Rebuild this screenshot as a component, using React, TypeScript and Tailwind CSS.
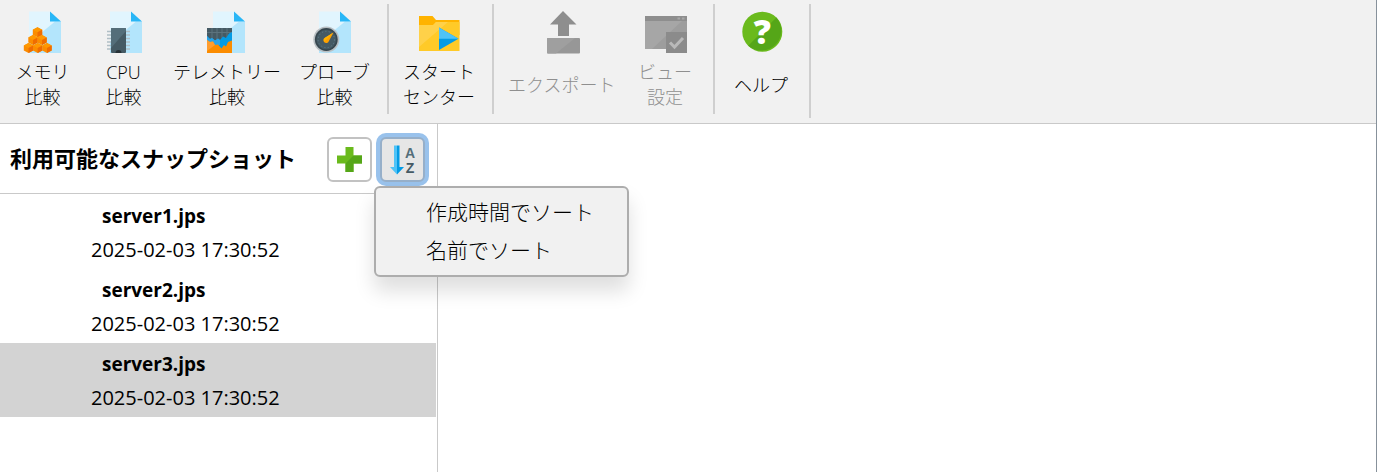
import { useState } from "react";
import type { ReactNode } from "react";

interface Snapshot {
  id: number;
  name: string;
  created: string;
}

interface ToolItem {
  key: string;
  lines: string[];
  icon: ReactNode;
  disabled?: boolean;
}

const snapshots: Snapshot[] = [
  { id: 1, name: "server1.jps", created: "2025-02-03 17:30:52" },
  { id: 2, name: "server2.jps", created: "2025-02-03 17:30:52" },
  { id: 3, name: "server3.jps", created: "2025-02-03 17:30:52" },
];

function IconBox({ children }: { children: ReactNode }) {
  return (
    <svg viewBox="0 0 42 42" className="h-[42px] w-[42px] shrink-0 overflow-visible" aria-hidden="true">
      {children}
    </svg>
  );
}

function Sheet() {
  return (
    <>
      <path d="M7 .5H28L39 10.5V42H7Z" fill="#e1f5fe" />
      <path d="M33 10.5H39V42H7V32Z" fill="#b3e5fc" />
      <path d="M28 .5L39 10.5H28Z" fill="#29b6f6" />
    </>
  );
}

function Cube({ x, y }: { x: number; y: number }) {
  return (
    <g transform={`translate(${x} ${y})`}>
      <path d="M0 -5L4.7 -2.6V2.6L0 5L-4.7 2.6V-2.6Z" fill="#fb8c00" />
      <path d="M0 -5L4.7 -2.6L0 0L-4.7 -2.6Z" fill="#ff9800" />
      <path d="M0 0L4.7 -2.6V2.6L0 5Z" fill="#ef6c00" />
    </g>
  );
}

function MemoryIcon() {
  return (
    <IconBox>
      <Sheet />
      <Cube x={15.5} y={21.3} />
      <Cube x={11} y={29} />
      <Cube x={20} y={29} />
      <Cube x={6.5} y={37} />
      <Cube x={15.7} y={37} />
      <Cube x={25} y={37} />
    </IconBox>
  );
}

function CpuIcon() {
  return (
    <IconBox>
      <Sheet />
      <path d="M4 20.5H27M4 24H27M4 27.5H27M4 31H27M4 34.5H27M4 38H27" stroke="#b0bec5" strokeWidth="1.6" />
      <rect x="8" y="17" width="15" height="25" rx="1" fill="#455a64" />
      <path d="M8 18Q8 17 9 17H22Q23 17 23 18V20L8 37Z" fill="#546e7a" />
      <path d="M12.5 42A3 3 0 0 1 18.5 42Z" fill="#263238" />
    </IconBox>
  );
}

function TelemetryIcon() {
  return (
    <IconBox>
      <Sheet />
      <rect x="1" y="17" width="25" height="25" fill="#455a64" />
      <path d="M6 17V28M11 17V28M16 17V28M21 17V28M1 21.5H26" stroke="#5c737e" strokeWidth="1" />
      <path d="M1 25L4 28L6 27L9 29.5L12 27.5L14 29L17 25.5L20 27L23 22.5L26 21V36L16 39L1 34Z" fill="#039be5" />
      <path d="M1 25L4 28L6 27L9 29.5L12 27.5L14 29V34H1Z" fill="#29a3e8" />
      <path d="M1 29L4 31L7 30.5L9 34L12 33.5L15.5 37.5L18 34L20 35.5L22 31L26 29.5V42H1Z" fill="#fb8c00" />
      <path d="M1 29L4 31L7 30.5L9 34L1 40Z" fill="#ff9d2e" />
    </IconBox>
  );
}

function ProbeIcon() {
  return (
    <IconBox>
      <g transform="translate(-1 0)">
        <Sheet />
      </g>
      <circle cx="13.3" cy="28.5" r="13" fill="#b8bfc3" />
      <circle cx="13.3" cy="28.5" r="11.4" fill="#37474f" />
      <circle cx="13.3" cy="28.5" r="9.8" fill="#455a64" />
      <circle cx="13.3" cy="28.5" r="8.2" fill="none" stroke="#607d8b" strokeWidth="1" strokeDasharray="1.2 2.2" />
      <path d="M20.5 21.5L15.8 30.2A2.8 2.8 0 1 1 12 26.7Z" fill="#ffa000" />
      <path d="M20.5 21.5L12 26.7A2.8 2.8 0 0 0 11.6 30.6Z" fill="#ffb300" />
    </IconBox>
  );
}

function StartIcon() {
  return (
    <IconBox>
      <path d="M1 5H14.5L18 9H41.5V24H1Z" fill="#ffb300" />
      <path d="M1 14H15L18 11H41.5V40H1Z" fill="#ffca28" />
      <path d="M1 14H15L18 11H30L1 36Z" fill="#ffd149" />
      <path d="M21 16.5L40.5 27.8L21 39Z" fill="#039be5" />
      <path d="M21 16.5L40.5 27.8H21Z" fill="#4fc3f7" />
    </IconBox>
  );
}

function ExportIcon() {
  return (
    <IconBox>
      <path d="M22 0L35.5 13.5H28V25H17V13.5H9Z" fill="#8e8e8e" />
      <rect x="6" y="27" width="33" height="15.5" rx="1" fill="#979797" />
      <path d="M7 27H34L15 42.5H7Q6 42.5 6 41.5V28Q6 27 7 27Z" fill="#9f9f9f" />
    </IconBox>
  );
}

function ViewIcon() {
  return (
    <IconBox>
      <rect x="1" y="5" width="42" height="33" fill="#9d9d9d" />
      <path d="M1 10H38L8 38H1Z" fill="#a6a6a6" />
      <rect x="1" y="5" width="42" height="5" fill="#8e8e8e" />
      <path d="M33.5 7.5H36M38 7.5H40.5" stroke="#a8a8a8" strokeWidth="2" />
      <rect x="22" y="21" width="21" height="21" fill="#8b8b8b" />
      <path d="M26 31.5L30.5 36L39 27" stroke="#b9b9b9" strokeWidth="3" fill="none" />
    </IconBox>
  );
}

function HelpIcon() {
  return (
    <IconBox>
      <circle cx="22.3" cy="20.7" r="20" fill="#6aba1c" />
      <path d="M36.4 6.6A20 20 0 0 1 8.2 34.8Z" fill="#55a618" />
      <text x="22.3" y="33" textAnchor="middle" fill="#ffffff" className="text-[34px] font-extrabold">?</text>
    </IconBox>
  );
}

const groups: ToolItem[][] = [
  [
    { key: "memory", lines: ["メモリ", "比較"], icon: <MemoryIcon /> },
    { key: "cpu", lines: ["CPU", "比較"], icon: <CpuIcon /> },
    { key: "telemetry", lines: ["テレメトリー", "比較"], icon: <TelemetryIcon /> },
    { key: "probe", lines: ["プローブ", "比較"], icon: <ProbeIcon /> },
  ],
  [{ key: "start", lines: ["スタート", "センター"], icon: <StartIcon /> }],
  [
    { key: "export", lines: ["エクスポート"], icon: <ExportIcon />, disabled: true },
    { key: "view", lines: ["ビュー", "設定"], icon: <ViewIcon />, disabled: true },
  ],
  [{ key: "help", lines: ["ヘルプ"], icon: <HelpIcon /> }],
];

function ToolButton({ item }: { item: ToolItem }) {
  return (
    <button
      type="button"
      disabled={item.disabled}
      className="flex min-w-[81px] flex-col items-center px-[9px] pt-[11px] text-black disabled:text-[#8f8f8f]"
    >
      {item.icon}
      <span className="mt-[7px] flex h-[50px] flex-col justify-center text-lg leading-[25px] font-light whitespace-nowrap">
        {item.lines.map((line) => (
          <span key={line}>{line}</span>
        ))}
      </span>
    </button>
  );
}

function Toolbar() {
  return (
    <header className="flex h-[124px] shrink-0 border-b border-[#c9c9c9] bg-[#f1f1f1] pl-0.5">
      {groups.map((group) => (
        <div key={group[0].key} className="flex pb-[9px] last:pb-[5px]">
          {group.map((item) => (
            <ToolButton key={item.key} item={item} />
          ))}
          <div className="mt-1 mr-[5px] ml-2 w-0.5 bg-[#cfcfcf]" />
        </div>
      ))}
    </header>
  );
}

function SortMenu({ onSelect }: { onSelect: () => void }) {
  return (
    <div
      role="menu"
      className="absolute top-[49px] -left-1.5 z-10 w-[255px] rounded-md border-2 border-[#adadad] bg-[#f1f1f1] pt-[5px] pb-1.5 shadow-[0_14px_20px_rgba(0,0,0,0.13)]"
    >
      {["作成時間でソート", "名前でソート"].map((label) => (
        <button
          key={label}
          type="button"
          role="menuitem"
          onClick={onSelect}
          className="block h-[38px] w-full pl-[50px] text-left text-[21px] leading-[38px] font-light whitespace-nowrap hover:bg-[#e0e0e0]"
        >
          {label}
        </button>
      ))}
    </div>
  );
}

export default function App() {
  const [selected, setSelected] = useState(3);
  const [menuOpen, setMenuOpen] = useState(true);

  return (
    <div className="flex min-h-screen flex-col border-r border-[#87919b] bg-white font-['Open_Sans','Noto_Sans_CJK_JP',sans-serif] text-black">
      <Toolbar />
      <div className="flex flex-1">
        <aside className="flex w-[438px] shrink-0 flex-col border-r border-[#c9c9c9]">
          <div className="flex h-[70px] items-center border-b border-[#c9c9c9] pt-0.5 pr-3 pl-2.5">
            <h1 className="flex-1 pb-1 text-[22px] leading-8 font-bold whitespace-nowrap">利用可能なスナップショット</h1>
            <div className="flex gap-2">
              <button
                type="button"
                aria-label="スナップショットを追加"
                className="flex h-[45px] w-[45px] items-center justify-center rounded-md border-2 border-[#c2c2c2] bg-white"
              >
                <svg viewBox="0 0 25 25" className="h-[25px] w-[25px]" aria-hidden="true">
                  <path d="M8.5 0H16.5V8.5H25V16.5H16.5V25H8.5V16.5H0V8.5H8.5Z" fill="#6aba1c" />
                  <path d="M16.5 8.5H25V16.5H16.5V25H8.5V16.5Z" fill="#55a618" />
                </svg>
              </button>
              <div className="relative">
                <button
                  type="button"
                  aria-label="ソート"
                  aria-expanded={menuOpen}
                  onClick={() => setMenuOpen(!menuOpen)}
                  className="flex h-[45px] w-[45px] items-center justify-center rounded-md border-2 border-[#96afc9] bg-[#e6e6e6] ring-4 ring-[#99c2ec]"
                >
                  <svg viewBox="0 0 28 30" className="h-[30px] w-7 overflow-visible font-['Liberation_Sans',sans-serif]" aria-hidden="true">
                    <path d="M5 .5H8V29.5L1 22H5Z" fill="#4fc3f7" />
                    <path d="M8 .5H10.5V22H15L8 29.5Z" fill="#039be5" />
                    <text x="21" y="13" textAnchor="middle" fill="#546e7a" className="text-[14px] font-bold">A</text>
                    <text x="21" y="28" textAnchor="middle" fill="#455a64" className="text-[14px] font-bold">Z</text>
                  </svg>
                </button>
                {menuOpen && <SortMenu onSelect={() => setMenuOpen(false)} />}
              </div>
            </div>
          </div>

          <ul className="pt-px pr-px">
            {snapshots.map((s) => (
              <li key={s.id}>
                <button
                  type="button"
                  onClick={() => setSelected(s.id)}
                  className={`block h-[74px] w-full pt-0.5 pl-[91px] text-left text-xl leading-[33px] ${selected === s.id ? "bg-[#d3d3d3]" : "bg-white"}`}
                >
                  <span className="block pl-[11px] text-[19px] leading-[33px] font-bold">{s.name}</span>
                  <span className="block">{s.created}</span>
                </button>
              </li>
            ))}
          </ul>
        </aside>
        <main className="flex-1 bg-white" />
      </div>
    </div>
  );
}
